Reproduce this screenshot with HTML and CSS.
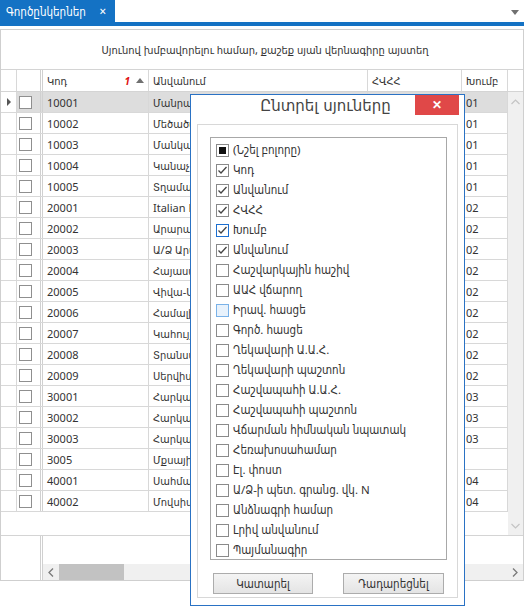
FILE: index.html
```html
<!DOCTYPE html>
<html>
<head>
<meta charset="utf-8">
<link rel="stylesheet" href="styles.css">
</head>
<body>
<div class="tabbar">
  <div class="tab"><span class="tab-title">Գործընկերներ</span><span class="tab-x">✕</span></div>
  <div class="tab-dd"></div>
</div>
<div class="stripe"></div>

<div class="grid">
  <div class="grouppanel">Սյունով խմբավորելու համար, քաշեք սյան վերնագիրը այստեղ</div>
  <div class="row header">
    <div class="c c-ind"></div>
    <div class="c c-chk"></div>
    <div class="c c-kod"><span>Կոդ</span><span class="sort"><i>1</i><b class="tri-up"></b></span></div>
    <div class="c c-name">Անվանում</div>
    <div class="c c-vhh">ՀՎՀՀ</div>
    <div class="c c-grp">Խումբ</div>
    <div class="c c-fill"></div>
  </div>
  <div class="body">
    <div class="rows">
      <div class="row sel"><div class="c c-ind"><b class="rowarrow"></b></div><div class="c c-chk"><span class="gbox"></span></div><div class="c c-kod">10001</div><div class="c c-name">Մանրածախ գնորդներ</div><div class="c c-vhh"></div><div class="c c-grp">01</div></div>
      <div class="row"><div class="c c-ind"></div><div class="c c-chk"><span class="gbox"></span></div><div class="c c-kod">10002</div><div class="c c-name">Մեծածախ գնորդներ</div><div class="c c-vhh"></div><div class="c c-grp">01</div></div>
      <div class="row"><div class="c c-ind"></div><div class="c c-chk"><span class="gbox"></span></div><div class="c c-kod">10003</div><div class="c c-name">Մանկական խանութ</div><div class="c c-vhh"></div><div class="c c-grp">01</div></div>
      <div class="row"><div class="c c-ind"></div><div class="c c-chk"><span class="gbox"></span></div><div class="c c-kod">10004</div><div class="c c-name">Կանաչ շուկա</div><div class="c c-vhh"></div><div class="c c-grp">01</div></div>
      <div class="row"><div class="c c-ind"></div><div class="c c-chk"><span class="gbox"></span></div><div class="c c-kod">10005</div><div class="c c-name">Տղամարդկանց հագուստ</div><div class="c c-vhh"></div><div class="c c-grp">01</div></div>
      <div class="row"><div class="c c-ind"></div><div class="c c-chk"><span class="gbox"></span></div><div class="c c-kod">20001</div><div class="c c-name">Italian Fashion</div><div class="c c-vhh"></div><div class="c c-grp">02</div></div>
      <div class="row"><div class="c c-ind"></div><div class="c c-chk"><span class="gbox"></span></div><div class="c c-kod">20002</div><div class="c c-name">Արարատ ՍՊԸ</div><div class="c c-vhh"></div><div class="c c-grp">02</div></div>
      <div class="row"><div class="c c-ind"></div><div class="c c-chk"><span class="gbox"></span></div><div class="c c-kod">20003</div><div class="c c-name">Ա/Ձ Արամ Պետրոսյան</div><div class="c c-vhh"></div><div class="c c-grp">02</div></div>
      <div class="row"><div class="c c-ind"></div><div class="c c-chk"><span class="gbox"></span></div><div class="c c-kod">20004</div><div class="c c-name">Հայաստանի էլեկտրացանցեր</div><div class="c c-vhh"></div><div class="c c-grp">02</div></div>
      <div class="row"><div class="c c-ind"></div><div class="c c-chk"><span class="gbox"></span></div><div class="c c-kod">20005</div><div class="c c-name">Վիվա-Սել ՄՏՍ</div><div class="c c-vhh"></div><div class="c c-grp">02</div></div>
      <div class="row"><div class="c c-ind"></div><div class="c c-chk"><span class="gbox"></span></div><div class="c c-kod">20006</div><div class="c c-name">Համալիր ՍՊԸ</div><div class="c c-vhh"></div><div class="c c-grp">02</div></div>
      <div class="row"><div class="c c-ind"></div><div class="c c-chk"><span class="gbox"></span></div><div class="c c-kod">20007</div><div class="c c-name">Կահույքի աշխարհ</div><div class="c c-vhh"></div><div class="c c-grp">02</div></div>
      <div class="row"><div class="c c-ind"></div><div class="c c-chk"><span class="gbox"></span></div><div class="c c-kod">20008</div><div class="c c-name">Տրանսպորտային ծառայություն</div><div class="c c-vhh"></div><div class="c c-grp">02</div></div>
      <div class="row"><div class="c c-ind"></div><div class="c c-chk"><span class="gbox"></span></div><div class="c c-kod">20009</div><div class="c c-name">Սերվիս ՍՊԸ</div><div class="c c-vhh"></div><div class="c c-grp">02</div></div>
      <div class="row"><div class="c c-ind"></div><div class="c c-chk"><span class="gbox"></span></div><div class="c c-kod">30001</div><div class="c c-name">Հարկային տեսչություն</div><div class="c c-vhh"></div><div class="c c-grp">03</div></div>
      <div class="row"><div class="c c-ind"></div><div class="c c-chk"><span class="gbox"></span></div><div class="c c-kod">30002</div><div class="c c-name">Հարկային մարմին</div><div class="c c-vhh"></div><div class="c c-grp">03</div></div>
      <div class="row"><div class="c c-ind"></div><div class="c c-chk"><span class="gbox"></span></div><div class="c c-kod">30003</div><div class="c c-name">Հարկային վարչություն</div><div class="c c-vhh"></div><div class="c c-grp">03</div></div>
      <div class="row"><div class="c c-ind"></div><div class="c c-chk"><span class="gbox"></span></div><div class="c c-kod">3005</div><div class="c c-name">Մքսային ծառայություն</div><div class="c c-vhh"></div><div class="c c-grp"></div></div>
      <div class="row"><div class="c c-ind"></div><div class="c c-chk"><span class="gbox"></span></div><div class="c c-kod">40001</div><div class="c c-name">Սահմանային ծառայություն</div><div class="c c-vhh"></div><div class="c c-grp">04</div></div>
      <div class="row"><div class="c c-ind"></div><div class="c c-chk"><span class="gbox"></span></div><div class="c c-kod">40002</div><div class="c c-name">Մովսիսյան Արմեն</div><div class="c c-vhh"></div><div class="c c-grp">04</div></div>
    </div>
    <div class="vscroll">
      <svg class="chev" width="9" height="6" viewBox="0 0 9 6"><path d="M0.5 5 L4.5 1 L8.5 5" fill="none" stroke="#c4c4c4" stroke-width="1.2"/></svg>
      <svg class="chev" width="9" height="6" viewBox="0 0 9 6"><path d="M0.5 1 L4.5 5 L8.5 1" fill="none" stroke="#c4c4c4" stroke-width="1.2"/></svg>
    </div>
  </div>
  <div class="footer">
    <div class="f-left"></div>
    <div class="f-right">
      <div class="hscroll">
        <svg class="hchev" width="6" height="9" viewBox="0 0 6 9"><path d="M5 0.5 L1 4.5 L5 8.5" fill="none" stroke="#7a7a7a" stroke-width="1.3"/></svg>
        <div class="thumb"></div>
        <div class="track"></div>
        <svg class="hchev" width="6" height="9" viewBox="0 0 6 9"><path d="M1 0.5 L5 4.5 L1 8.5" fill="none" stroke="#7a7a7a" stroke-width="1.3"/></svg>
      </div>
    </div>
  </div>
</div>

<div class="dialog">
  <div class="dlg-title">Ընտրել սյուները<span class="dlg-close">✕</span></div>
  <div class="dlg-group">
    <div class="listbox">
      <div class="item"><span class="cb ind"></span>(Նշել բոլորը)</div>
      <div class="item"><span class="cb"><svg width="11" height="11" viewBox="0 0 11 11"><path d="M1.5 5.5 L4 8 L9.5 2" fill="none" stroke="#444" stroke-width="1.3"/></svg></span>Կոդ</div>
      <div class="item"><span class="cb"><svg width="11" height="11" viewBox="0 0 11 11"><path d="M1.5 5.5 L4 8 L9.5 2" fill="none" stroke="#444" stroke-width="1.3"/></svg></span>Անվանում</div>
      <div class="item"><span class="cb"><svg width="11" height="11" viewBox="0 0 11 11"><path d="M1.5 5.5 L4 8 L9.5 2" fill="none" stroke="#444" stroke-width="1.3"/></svg></span>ՀՎՀՀ</div>
      <div class="item"><span class="cb focus"><svg width="11" height="11" viewBox="0 0 11 11"><path d="M1.5 5.5 L4 8 L9.5 2" fill="none" stroke="#444" stroke-width="1.3"/></svg></span>Խումբ</div>
      <div class="item"><span class="cb"><svg width="11" height="11" viewBox="0 0 11 11"><path d="M1.5 5.5 L4 8 L9.5 2" fill="none" stroke="#444" stroke-width="1.3"/></svg></span>Անվանում</div>
      <div class="item"><span class="cb"></span>Հաշվարկային հաշիվ</div>
      <div class="item"><span class="cb"></span>ԱԱՀ վճարող</div>
      <div class="item"><span class="cb hover"></span>Իրավ. հասցե</div>
      <div class="item"><span class="cb"></span>Գործ. հասցե</div>
      <div class="item"><span class="cb"></span>Ղեկավարի Ա.Ա.Հ.</div>
      <div class="item"><span class="cb"></span>Ղեկավարի պաշտոն</div>
      <div class="item"><span class="cb"></span>Հաշվապահի Ա.Ա.Հ.</div>
      <div class="item"><span class="cb"></span>Հաշվապահի պաշտոն</div>
      <div class="item"><span class="cb"></span>Վճարման հիմնական նպատակ</div>
      <div class="item"><span class="cb"></span>Հեռախոսահամար</div>
      <div class="item"><span class="cb"></span>Էլ. փոստ</div>
      <div class="item"><span class="cb"></span>Ա/Ձ-ի պետ. գրանց. վկ. N</div>
      <div class="item"><span class="cb"></span>Անձնագրի համար</div>
      <div class="item"><span class="cb"></span>Լրիվ անվանում</div>
      <div class="item"><span class="cb"></span>Պայմանագիր</div>
    </div>
    <div class="dlg-buttons">
      <div class="btn btn-ok">Կատարել</div>
      <div class="btn btn-cancel">Դադարեցնել</div>
    </div>
  </div>
</div>
</body>
</html>
```

FILE: styles.css
```css
* { box-sizing: border-box; }
html, body { margin: 0; padding: 0; background: #fff; }
body {
  width: 524px;
  height: 606px;
  overflow: hidden;
  position: relative;
  font-family: "Noto Sans", "DejaVu Sans Condensed", "DejaVu Sans", sans-serif;
  font-size: 11px;
  color: #333;
}

/* tab bar */
.tabbar { display: flex; height: 22px; align-items: stretch; }
.tab {
  width: 115px;
  background: #1472c4;
  color: #fff;
  display: flex;
  align-items: center;
  padding-left: 6px;
  font-size: 11.5px;
}
.tab-title { width: 93px; white-space: nowrap; overflow: hidden; }
.tab-x { font-size: 10px; font-weight: bold; }
.tab-dd {
  margin-left: auto;
  margin-right: 5px;
  margin-top: 10px;
  width: 0; height: 0;
  border-left: 4px solid transparent;
  border-right: 4px solid transparent;
  border-top: 5px solid #707070;
}
.stripe { height: 4px; background: #1472c4; }

/* grid */
.grid {
  margin-top: 3px;
  width: 524px;
  border: 1px solid #cfcfcf;
}
.grouppanel {
  height: 40px;
  border-bottom: 1px solid #d4d4d4;
  display: flex;
  align-items: center;
  justify-content: center;
  padding-left: 6px;
}
.row { display: flex; height: 21px; border-bottom: 1px solid #d8d8d8; }
.header { height: 22px; border-bottom: 1px solid #d4d4d4; background: #fff; }
.c {
  border-right: 1px solid #d8d8d8;
  padding: 0 4px;
  display: flex;
  align-items: center;
  white-space: nowrap;
  overflow: hidden;
}
.c-ind { width: 16px; padding: 0; }
.c-chk { width: 26px; border-right: 3px double #d0d0d0; padding: 0 0 0 2px; }
.c-kod { width: 106px; }
.c-name { width: 219px; }
.c-vhh { width: 94px; }
.c-grp { width: 46px; }
.c-fill { width: 15px; border-right: none; }
.header .c-kod { justify-content: space-between; }
.sort { display: flex; align-items: center; gap: 6px; }
.sort i { color: #e01010; font-weight: bold; font-size: 10px; }
.tri-up {
  width: 0; height: 0;
  border-left: 4.5px solid transparent;
  border-right: 4.5px solid transparent;
  border-bottom: 5px solid #707070;
}
.row.sel .c:not(.c-ind) { background: #dddddd; }
.rowarrow {
  margin-left: 6px;
  width: 0; height: 0;
  border-top: 4px solid transparent;
  border-bottom: 4px solid transparent;
  border-left: 4px solid #555;
}
.gbox {
  width: 13px; height: 13px;
  border: 1px solid #8f8f8f;
  background: #fff;
}

.body { display: flex; height: 444px; border-bottom: 1px solid #d4d4d4; }
.rows { width: 507px; }
.vscroll {
  width: 15px;
  background: #f0f0f0;
  display: flex;
  flex-direction: column;
  justify-content: space-between;
  align-items: center;
  padding: 7px 0 6px;
}

.footer { display: flex; height: 44px; }
.f-left { width: 42px; border-right: 3px double #d0d0d0; }
.f-right { flex: 1; display: flex; flex-direction: column; justify-content: flex-end; }
.hscroll {
  height: 16px;
  background: #f0f0f0;
  display: flex;
  align-items: center;
}
.hchev { margin: 0 5px 0 5px; }
.thumb { width: 65px; height: 16px; background: #c2c2c2; }
.track { flex: 1; }

/* dialog */
.dialog {
  position: absolute;
  left: 190px;
  top: 94px;
  width: 275px;
  height: 512px;
  border: 1px solid #2a72c4;
  background: #fff;
}
.dlg-title {
  height: 29px;
  position: relative;
  text-align: center;
  font-family: "DejaVu Sans", sans-serif;
  font-size: 15px;
  line-height: 23px;
  color: #444;
  padding-right: 4px;
}
.dlg-close {
  position: absolute;
  right: 5px;
  top: 0;
  width: 44px;
  height: 20px;
  background: #e04848;
  color: #fff;
  font-family: "Noto Sans", sans-serif;
  font-size: 12px;
  font-weight: bold;
  line-height: 20px;
  text-align: center;
}
.dlg-group {
  margin: 0 6px;
  height: 474px;
  border: 1px solid #d8d8d8;
  padding: 12px 0 0 12px;
}
.listbox {
  width: 237px;
  height: 423px;
  border: 1px solid #a8a8a8;
  padding: 3px 0 0 5px;
  overflow: hidden;
}
.item {
  height: 20px;
  display: flex;
  align-items: flex-start;
  font-size: 11.5px;
  line-height: 18px;
  color: #333;
  white-space: nowrap;
}
.cb {
  flex: none;
  width: 13px;
  height: 13px;
  margin-top: 3px;
  margin-right: 4px;
  border: 1px solid #8a8a8a;
  background: #fff;
  display: flex;
  align-items: center;
  justify-content: center;
}
.cb.ind::after { content: ""; width: 7px; height: 7px; background: #111; }
.cb.focus { border-color: #1c6fd0; }
.cb.hover { border-color: #7ab2e8; background: #e8f2fc; }
.dlg-buttons {
  display: flex;
  margin-top: 13px;
  padding-left: 3px;
}
.btn {
  height: 21px;
  border: 1px solid #acacac;
  background: linear-gradient(#f4f4f4, #e4e4e4);
  display: flex;
  align-items: center;
  justify-content: center;
  font-size: 11.5px;
  color: #333;
}
.btn-ok { width: 100px; }
.btn-cancel { width: 101px; margin-left: 30px; }
```
